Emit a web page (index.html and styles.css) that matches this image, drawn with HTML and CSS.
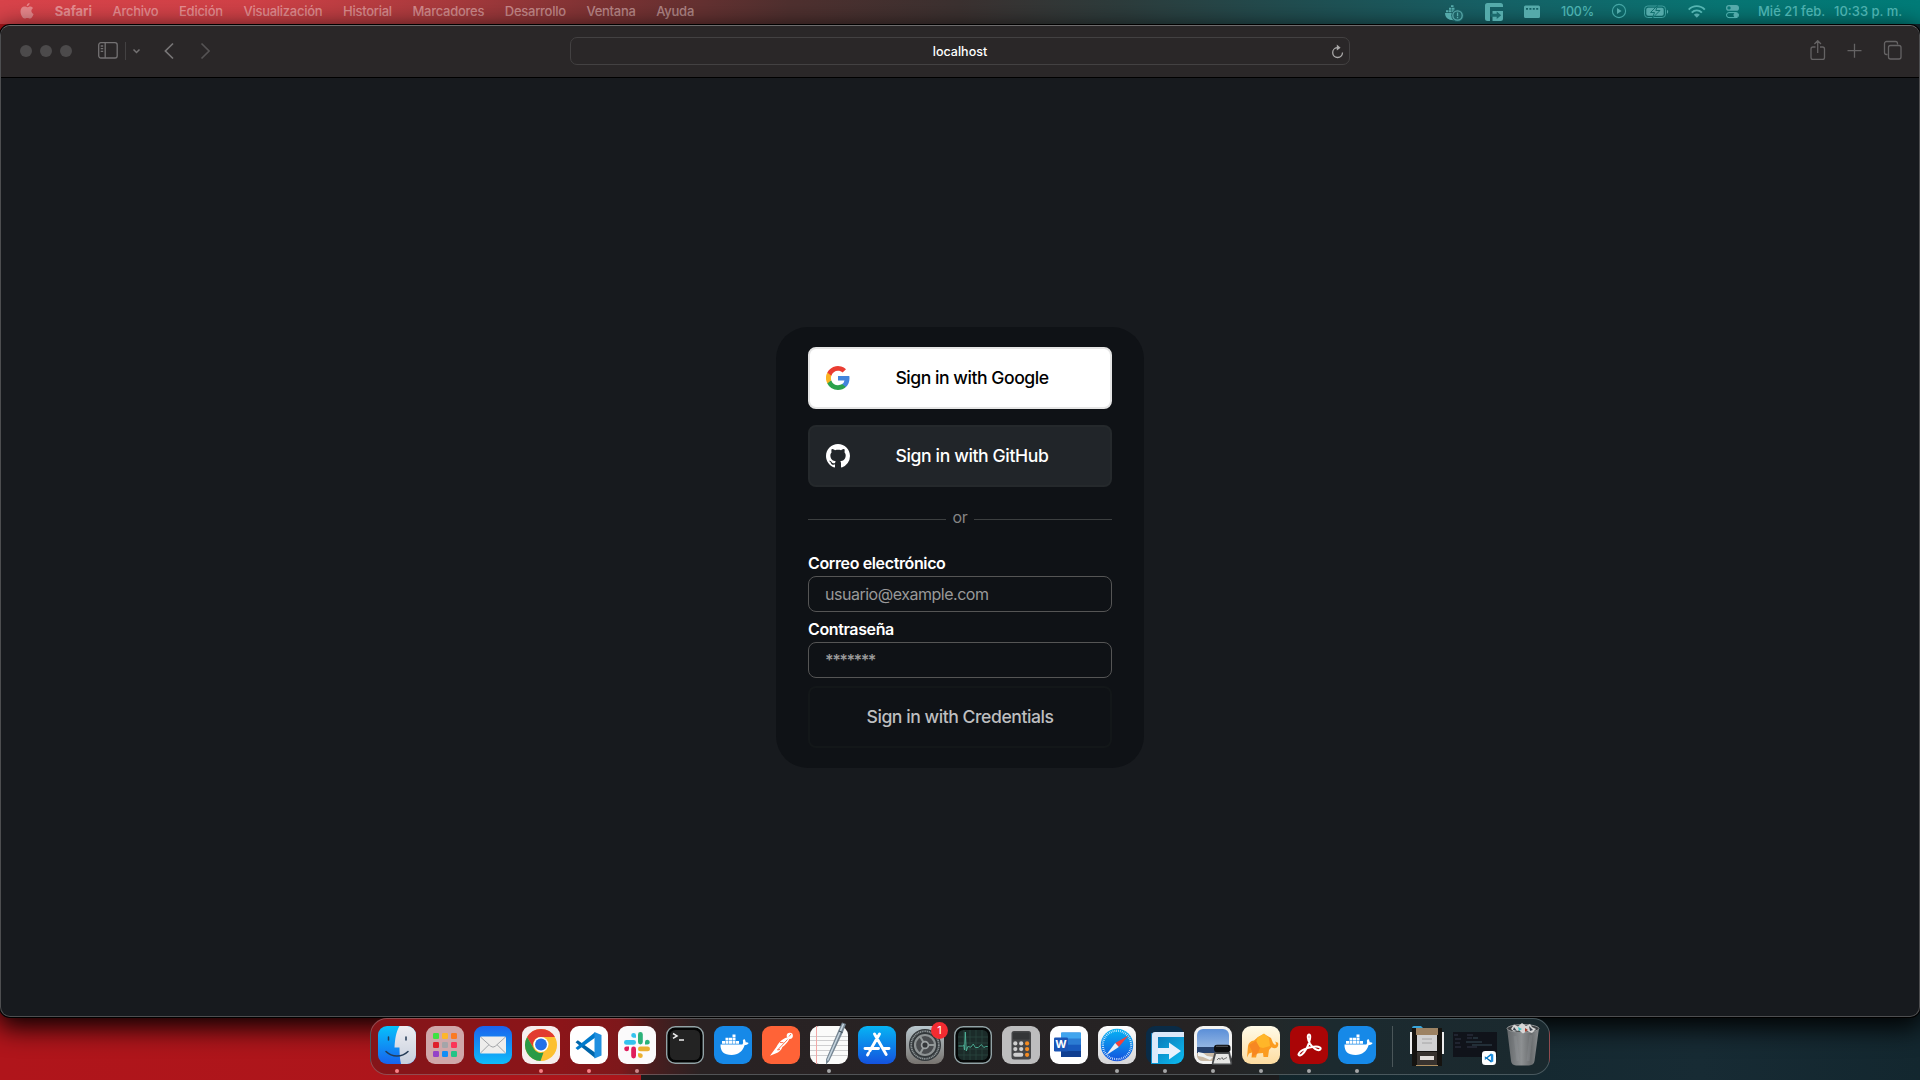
FILE: index.html
```
<!DOCTYPE html>
<html lang="es">
<head>
<meta charset="utf-8">
<title>localhost</title>
<link rel="stylesheet" href="styles.css">
</head>
<body>
<svg class="defs" width="0" height="0" aria-hidden="true">
  <defs>
    <linearGradient id="gBlue" x1="0" y1="0" x2="0" y2="1"><stop offset="0" stop-color="#07c1fb"/><stop offset="1" stop-color="#1763ee"/></linearGradient>
    <linearGradient id="gMail" x1="0" y1="0" x2="0" y2="1"><stop offset="0" stop-color="#1a63ee"/><stop offset="1" stop-color="#0fbcfa"/></linearGradient>
    <linearGradient id="gStore" x1="0" y1="0" x2="0" y2="1"><stop offset="0" stop-color="#06b4f4"/><stop offset="1" stop-color="#1452de"/></linearGradient>
    <linearGradient id="gFace" x1="0" y1="0" x2="0" y2="1"><stop offset="0" stop-color="#eeeef2"/><stop offset="1" stop-color="#c7cfdd"/></linearGradient>
    <linearGradient id="gPaper" x1="0" y1="0" x2="0" y2="1"><stop offset="0" stop-color="#fff"/><stop offset="1" stop-color="#d5d5d7"/></linearGradient>
    <linearGradient id="gMetal" x1="0" y1="0" x2="0" y2="1"><stop offset="0" stop-color="#b9c7ce"/><stop offset="1" stop-color="#77736f"/></linearGradient>
    <linearGradient id="gArrow" x1="0" y1="0" x2="1" y2="1"><stop offset="0" stop-color="#0b6fae"/><stop offset="1" stop-color="#0cbdf3"/></linearGradient>
    <linearGradient id="gSky" x1="0" y1="0" x2="0" y2="1"><stop offset="0" stop-color="#5b8fd8"/><stop offset="1" stop-color="#bcd2ea"/></linearGradient>
    <linearGradient id="gSand" x1="0" y1="0" x2="0" y2="1"><stop offset="0" stop-color="#fffbe8"/><stop offset="1" stop-color="#fddca0"/></linearGradient>
    <linearGradient id="gBin" x1="0" y1="0" x2="1" y2="0"><stop offset="0" stop-color="#63676a"/><stop offset=".45" stop-color="#8d9092"/><stop offset=".75" stop-color="#6a6d6f"/><stop offset="1" stop-color="#8b8e90"/></linearGradient>
    <g id="whale">
      <path d="M6.500 18.400h21.800c.9-.8 1-2.200.5-3.600.3-.8.8-1.300 1.300-1.700 1 .7 1.700 1.900 1.500 3.200 1.200-.2 2.200.1 3 .7-.6 1.400-2 2.100-3.900 2.100C28.700 25.500 24.300 28.900 17.600 28.900 10 28.900 6.300 25.400 6.500 18.400z"/>
      <path d="M8 14.900h3v2.800H8zM11.500 14.900h3v2.800h-3zM15 14.900h3v2.800h-3zM18.500 14.900h3v2.800h-3zM22 14.900h3v2.800h-3zM11.500 11.700h3v2.800h-3zM15 11.700h3v2.800h-3zM18.500 11.700h3v2.800h-3zM18.500 8.600h3v2.700h-3z"/>
    </g>
    <g id="code">
      <path fill="#0065a9" d="m5.500 16.200 2.300-1.900L25 26.500V32z"/>
      <path fill="#007acc" d="m5.500 22 2.300 1.900L25 11.700V6.200z"/>
      <path fill="#1f8fe0" d="m24.500 6 7 3v20.400l-7 3z"/>
    </g>
  </defs>
</svg>

<header class="menubar">
  <nav class="menus">
    <svg class="apple" viewBox="0 0 14 16" width="14" height="16"><path d="M9.600 0c.1 1.700-1.300 3.200-2.900 3.200C6.500 1.700 8 .2 9.600 0zM7.200 4.300c.8 0 1.700-.8 3-.8 1.100 0 2.200.6 2.900 1.500-2.500 1.500-2.100 4.900.5 5.900-.6 1.800-2 4.600-3.600 4.600-1 0-1.500-.6-2.700-.6s-1.700.6-2.600.6C2.900 15.600.5 12 .5 8.500c0-3.100 1.900-4.900 3.900-4.900 1.200 0 2.200.7 2.800.7z"/></svg>
    <b>Safari</b><span>Archivo</span><span>Edición</span><span>Visualización</span><span>Historial</span><span>Marcadores</span><span>Desarrollo</span><span>Ventana</span><span>Ayuda</span>
  </nav>
  <div class="status">
    <svg viewBox="0 0 313 24" width="313" height="24">
      <path d="M1 13h11v7C5 21 1 18 1 13zM2 10.300h2.500v2H2zM5 10.300h2.500v2H5zM8 10.300h2.500v2H8zM5 7.700h2.500v2H5zM8 7.700h2.500v2H8zM7 5.300h2.500V7.100H7z"/>
      <circle cx="13.500" cy="15.500" r="6.300" fill="#1d6165"/><circle cx="13.500" cy="15.500" r="4.700" fill="none" stroke="#56a5a6" stroke-width="1.300"/><path d="M12.900 12.600h1.300v3.600h-1.300zM12.900 17h1.300v1.300h-1.300z"/>
      <path d="M43.500 3h13A2.500 2.500 0 0 1 59 5.500V7H46v14h-2.500a2.500 2.500 0 0 1-2.500-2.500v-13A2.500 2.500 0 0 1 43.500 3z"/>
      <path d="M48.500 11H59v7.500a2.500 2.500 0 0 1-2.500 2.500h-8z"/><path fill="#1b696c" d="M46.500 13.800h6.200v-2.200l4.500 3.700-4.500 3.700v-2.200h-6.200z"/>
      <path fill-rule="evenodd" d="M81.500 5.500h13A1.500 1.500 0 0 1 96 7v9.500a1.500 1.500 0 0 1-1.500 1.500h-13a1.500 1.500 0 0 1-1.500-1.500V7a1.500 1.500 0 0 1 1.500-1.500zM82 8v1.700h2V8zm3.400 0v1.700h2V8zm3.400 0v1.700h2V8zm3.400 0v1.700h2V8z"/>
      <circle cx="175" cy="11" r="6.600" fill="none" stroke="#45a6a5" stroke-width="1.100"/><path d="M173 8.100v5.800l4.600-2.900z"/>
      <rect x="200.500" y="6" width="21" height="11.500" rx="3.300" fill="none" stroke="#3f9d9c"/><rect x="202.300" y="7.800" width="17.400" height="7.900" rx="1.900"/><path d="M223 9.800c1.600.5 1.600 3.400 0 4z"/><path d="m213.500 5.500-7 7h4l-2 5.500 7.500-7.500h-4.200z" stroke="#10706f" stroke-width="1"/>
      <g fill="none" stroke="#55b5b2" stroke-width="1.900"><path d="M244.700 9.600c4.500-4.600 11.600-4.600 16.100 0"/><path d="M247.700 12.600c3-2.900 7.200-2.900 10.200 0"/></g><path d="M249.800 14.700c1.800-1.500 4.200-1.500 6 0l-3 3z"/>
      <rect x="282" y="5" width="13" height="5.800" rx="2.900"/><circle cx="285" cy="7.900" r="1.700" fill="#087775"/><rect x="282.500" y="12.600" width="12" height="5" rx="2.500" fill="none" stroke="#55b5b2"/><circle cx="291.800" cy="15.100" r="2.400"/>
    </svg>
    <span class="percent">100%</span>
    <span class="date">Mié 21 feb.</span><span class="clock">10:33 p. m.</span>
  </div>
</header>

<main class="window">
  <div class="toolbar">
    <div class="tools">
      <div class="lights"><i></i><i></i><i></i></div>
      <svg class="side" viewBox="0 0 44 20" width="44" height="20" fill="none" stroke="#747273" stroke-width="1.300"><rect x=".7" y="1.700" width="18.500" height="15.300" rx="2.200"/><path d="M7.200 2v15M2.700 5h2.500M2.700 7.700h2.500M2.700 10.400h2.500"/><path d="M27.500 1v18" stroke="#434142" stroke-width="1"/><path d="m35.500 8.500 3 3 3-3" stroke-width="1.500"/></svg>
      <svg class="arrows" viewBox="0 0 46 18" width="46" height="18" fill="none" stroke-width="1.700"><path d="M9 1.500 1.400 9 9 16.500" stroke="#777576"/><path d="M37.500 1.500 45.100 9l-7.600 7.500" stroke="#555354"/></svg>
    </div>
    <div class="address"><span>localhost</span>
      <svg class="reload" viewBox="0 0 13 15" width="13" height="15"><path d="M6.200 3.700a4.900 4.900 0 1 0 5.300 4.900" fill="none" stroke="#a9a8a8" stroke-width="1.300"/><path d="M5.800.5v6l3.800-2.700z" fill="#a9a8a8"/></svg>
    </div>
    <svg class="actions" viewBox="0 0 92 20" width="92" height="20" fill="none" stroke="#656364" stroke-width="1.300"><path d="M5.500 7H3a2 2 0 0 0-2 2v8.500a2 2 0 0 0 2 2h9.500a2 2 0 0 0 2-2V9a2 2 0 0 0-2-2H10M7.700 13V1M4.400 4l3.300-3.300L11 4M37.500 10.700h14M44.500 3.700v14"/><path d="M77.500 14.500h-1a2 2 0 0 1-2-2v-9a2 2 0 0 1 2-2h9a2 2 0 0 1 2 2v1"/><rect x="78.500" y="5.500" width="12.500" height="13.500" rx="2"/></svg>
  </div>
  <section class="page">
    <div class="card">
      <button class="provider google">
        <svg viewBox="0 0 24 24" width="24" height="24"><path fill="#4285dc" d="M23.500 12.300c0-.8-.1-1.600-.2-2.300H12v4.500h6.500a5.600 5.600 0 0 1-2.400 3.600v3h3.900c2.300-2.100 3.500-5.200 3.500-8.800z"/><path fill="#2ba24c" d="M12 24c3.200 0 6-1.100 7.900-2.900l-3.900-3c-1 .7-2.400 1.200-4 1.200-3.100 0-5.800-2.100-6.700-4.900H1.300v3.100A12 12 0 0 0 12 24z"/><path fill="#fbb322" d="M5.300 14.300a7 7 0 0 1 0-4.600V6.600H1.300a12 12 0 0 0 0 10.800z"/><path fill="#ea3d32" d="M12 4.800c1.800 0 3.300.6 4.600 1.800L20 3.200A12 12 0 0 0 1.300 6.600l4 3.100C6.200 6.900 8.900 4.800 12 4.800z"/></svg>
        <span>Sign in with Google</span>
      </button>
      <button class="provider github">
        <svg viewBox="0 0 16 16" width="24" height="24"><path fill="#fff" d="M8 0C3.580 0 0 3.580 0 8c0 3.540 2.290 6.530 5.470 7.590.4.070.55-.17.55-.38 0-.19-.01-.82-.01-1.490-2.010.37-2.530-.49-2.690-.94-.09-.23-.48-.94-.82-1.130-.28-.15-.68-.52-.01-.53.63-.01 1.080.58 1.230.82.72 1.210 1.870.87 2.330.66.07-.52.28-.87.51-1.070-1.780-.2-3.640-.89-3.640-3.950 0-.87.31-1.590.82-2.150-.08-.2-.36-1.020.08-2.120 0 0 .67-.21 2.200.82.64-.18 1.320-.27 2-.27s1.360.09 2 .27c1.530-1.040 2.200-.82 2.200-.82.44 1.100.16 1.920.08 2.120.51.56.82 1.270.82 2.150 0 3.070-1.870 3.750-3.650 3.950.29.25.54.73.54 1.480 0 1.070-.01 1.930-.01 2.200 0 .21.15.46.55.38A8.010 8.010 0 0 0 16 8c0-4.420-3.580-8-8-8z"/></svg>
        <span>Sign in with GitHub</span>
      </button>
      <div class="or"><span>or</span></div>
      <label class="field"><span>Correo electrónico</span><input type="text" placeholder="usuario@example.com"></label>
      <label class="field"><span>Contraseña</span><input class="secret" type="password" placeholder="*******"></label>
      <button class="provider credentials"><span>Sign in with Credentials</span></button>
    </div>
  </section>
</main>

<footer class="dock">
  <div class="app open"><svg viewBox="0 0 38 38"><rect width="38" height="38" rx="9" fill="url(#gBlue)"/><path fill="url(#gFace)" d="M21.500 0H29a9 9 0 0 1 9 9v20a9 9 0 0 1-9 9h-6c-1-4-1.500-9-1.500-16.500h-5C17 13 18 6 21.500 0z"/><g fill="none" stroke="#243b55" stroke-width="1.500" stroke-linecap="round"><path d="M10.500 11v3M28 11v3M8 25.500c6 6 16 6 22 0"/></g></svg></div>
  <div class="app"><svg viewBox="0 0 38 38"><rect width="38" height="38" rx="9" fill="#d0a8aa"/><g><rect x="7" y="7" width="6" height="6" rx="1.300" fill="#3ee242"/><rect x="16" y="7" width="6" height="6" rx="1.300" fill="#fdb62a"/><rect x="25" y="7" width="6" height="6" rx="1.300" fill="#fa7a22"/><rect x="7" y="16" width="6" height="6" rx="1.300" fill="#df202a"/><rect x="16" y="16" width="6" height="6" rx="1.300" fill="#a4a5a9"/><rect x="25" y="16" width="6" height="6" rx="1.300" fill="#fb3557"/><rect x="7" y="25" width="6" height="6" rx="1.300" fill="#9543c8"/><rect x="16" y="25" width="6" height="6" rx="1.300" fill="#138ef5"/><rect x="25" y="25" width="6" height="6" rx="1.300" fill="#23c486"/></g></svg></div>
  <div class="app"><svg viewBox="0 0 38 38"><rect width="38" height="38" rx="9" fill="url(#gMail)"/><rect x="6" y="10.500" width="26" height="17" rx="1.500" fill="#eeedec"/><path d="m6.500 11 10.300 9.300q2.200 1.700 4.400 0L31.500 11M6.500 27l8.500-8.300M31.500 27 23 18.700" fill="none" stroke="#a3a5a8" stroke-width="1"/></svg></div>
  <div class="app open"><svg viewBox="0 0 38 38"><rect width="38" height="38" rx="9" fill="#f6eeee"/><circle cx="19" cy="19" r="16" fill="#fcc031"/><path fill="#e23c30" d="M5.100 11a16 16 0 0 1 27.800 0H19a8 8 0 0 0-7 12z"/><path fill="#2a9a46" d="M5.100 11 12 23a8 8 0 0 0 9.500 3.600L18.500 35A16 16 0 0 1 5.100 11z"/><circle cx="19" cy="18.500" r="7.500" fill="#fff"/><circle cx="19" cy="18.500" r="5.900" fill="#2471e7"/></svg></div>
  <div class="app open"><svg viewBox="0 0 38 38"><rect width="38" height="38" rx="9" fill="#fff"/><use href="#code"/></svg></div>
  <div class="app open"><svg viewBox="0 0 38 38"><rect width="38" height="38" rx="9" fill="#fbfafb"/><g fill="#35c2ee"><rect x="6" y="14" width="12" height="4.800" rx="2.400"/><path d="M18 12.500h-2.500A2.400 2.400 0 1 1 18 10z" transform="translate(0 -.8)"/></g><g fill="#2db27a"><rect x="20" y="6" width="4.800" height="12.500" rx="2.400"/><path d="M27 18.500V16a2.400 2.400 0 1 1 2.400 2.500z"/></g><g fill="#ebb031"><rect x="20" y="20.500" width="12" height="4.800" rx="2.400"/><path d="M20 27.200h2.500a2.400 2.400 0 1 1-2.500 2.400z"/></g><g fill="#df1d5c"><rect x="13.200" y="20.500" width="4.800" height="12" rx="2.400"/><path d="M11 20.500V23a2.400 2.400 0 1 1-2.400-2.500z"/></g></svg></div>
  <div class="app"><svg viewBox="0 0 38 38"><rect x=".7" y=".7" width="36.600" height="36.600" rx="8.500" fill="#030404" stroke="#92a3a6" stroke-width="1.400"/><rect x="4" y="4" width="30" height="30" rx="5.500" fill="#232323"/><path d="m7 7.500 4 2.400-4 2.400M13 14h5" fill="none" stroke="#eee" stroke-width="1.500"/></svg></div>
  <div class="app"><svg viewBox="0 0 38 38"><rect width="38" height="38" rx="9" fill="#1689e8"/><use href="#whale" fill="#fff"/></svg></div>
  <div class="app"><svg viewBox="0 0 38 38"><rect width="38" height="38" rx="9" fill="#ff6337"/><circle cx="27.800" cy="9.800" r="3.100" fill="#fff"/><path d="M25 11.500c-5 1.300-8.600 5.400-10.600 9.600L8 29.800l5.500-2.200c3.500-1 5.800-3.500 6.900-6.600 2.800-2 5.200-4.400 7-8z" fill="#fff"/><path d="m25.500 13.500-10 10.500 2.500-.5M18 16.500l3.500.2M29 8l-2 2.500" fill="none" stroke="#ff6337" stroke-width=".9"/></svg></div>
  <div class="app open"><svg viewBox="0 0 38 38"><rect width="38" height="38" rx="9" fill="#fbfbfa"/><path d="M0 10.500h38M0 14.500h38M0 19.500h38M0 24.500h38M0 29.500h38" stroke="#c9cacb" stroke-width=".9"/><path d="M6.500 0v38" stroke="#f2a7a5"/><path d="m32-3.500 4 1.600-3 8-13.700 28.900-3.300 3.500.1-5.200L28.300 4.500z" fill="#748491"/><path d="m33.500-2-16 36.500" stroke="#c6d5df" stroke-width="1.600"/><path d="m29 5 3.500 1.600" stroke="#36424d"/></svg></div>
  <div class="app"><svg viewBox="0 0 38 38"><rect width="38" height="38" rx="9" fill="url(#gStore)"/><path d="m21.500 8-9.700 17M16.500 8l11.700 20.500M7 22.500h13.500M25.500 22.500H31M10.500 27.200l-1 1.700" fill="none" stroke="#fff" stroke-width="2.900" stroke-linecap="round"/></svg></div>
  <div class="app"><svg viewBox="0 0 38 38"><rect width="38" height="38" rx="9" fill="url(#gMetal)"/><circle cx="19" cy="19" r="16" fill="#33383b"/><circle cx="19" cy="19" r="13.800" fill="none" stroke="#8b9294" stroke-width="1.800" stroke-dasharray="1.200 .6"/><circle cx="19" cy="19" r="10" fill="#494c4f" stroke="#8d9293" stroke-width="2.200"/><path d="m19 19 10 0M19 19l-5-8.700M19 19l-5 8.700" stroke="#929898" stroke-width="2"/><circle cx="19" cy="19" r="3.400" fill="#34373a" stroke="#9ea3a4" stroke-width="1.700"/></svg><em class="badge">1</em></div>
  <div class="app"><svg viewBox="0 0 38 38"><rect x=".7" y=".7" width="36.600" height="36.600" rx="8.500" fill="#050707" stroke="#92a3a6" stroke-width="1.400"/><rect x="4" y="4" width="30" height="30" rx="5.500" fill="#1b2b29"/><path d="M4 11h30M4 17h30M4 23h30M4 29h30M10 4v30M16 4v30M22 4v30M28 4v30" stroke="#2d4743" stroke-width=".7"/><path d="M4.500 20h4l1.200-1 .8 5L11.300 6l1 19 1.500-4.500 3 .7 2.500-3.200 2 3.500h3l3-3 2.500 3 2-1h2" fill="none" stroke="#4fb69b" stroke-width=".9"/></svg></div>
  <div class="app"><svg viewBox="0 0 38 38"><rect width="38" height="38" rx="9" fill="#bdbdbe"/><rect x="9.500" y="5" width="19.500" height="28.500" rx="2.500" fill="#454648"/><rect x="11" y="6.500" width="16.500" height="7" rx="1" fill="#343638"/><g fill="#cfcfcf"><circle cx="13.300" cy="17.400" r="2.100"/><circle cx="19.200" cy="17.400" r="2.100"/><circle cx="13.300" cy="23.100" r="2.100"/><circle cx="19.200" cy="23.100" r="2.100"/><rect x="11.200" y="26.800" width="10.100" height="4" rx="2"/></g><g fill="#f58b20"><circle cx="25.100" cy="17.400" r="2.100"/><circle cx="25.100" cy="23.100" r="2.100"/><circle cx="25.100" cy="28.800" r="2.100"/></g></svg></div>
  <div class="app"><svg viewBox="0 0 38 38"><rect width="38" height="38" rx="9" fill="#fff"/><rect x="11" y="6.500" width="20" height="24.500" rx="1.500" fill="#2b7cd3"/><path d="M11 6.500h20v6H11z" fill="#41a5ee"/><path d="M11 18.700h20v6H11z" fill="#185abd"/><path d="M11 24.800h20V31H11z" fill="#103f91"/><rect x="4" y="11.500" width="14" height="14" rx="1.300" fill="#1b55b5"/><text x="11" y="22.300" text-anchor="middle" class="word">W</text></svg></div>
  <div class="app open"><svg viewBox="0 0 38 38"><rect width="38" height="38" rx="9" fill="url(#gPaper)"/><circle cx="19" cy="19" r="16.200" fill="url(#gStore)"/><circle cx="19" cy="19" r="14.200" fill="none" stroke="#e9f5ff" stroke-width="2.200" stroke-dasharray=".7 1.180"/><path d="M30.500 9.500 20.800 21l-3.600-4z" fill="#f3403c"/><path d="M7.800 29.500 17.200 17l3.600 4z" fill="#eceef2"/></svg></div>
  <div class="app open"><svg viewBox="0 0 38 38"><rect width="38" height="38" rx="9" fill="#0a2b46"/><path d="M5 7h33v22a9 9 0 0 1-9 9H5z" fill="url(#gArrow)"/><path d="M6 9q0-3 3-3h29v5H12v26H6z" fill="#dbe9fa"/><path d="M12 22h11v-5.500l12 8.500-12 8.500V28H12z" fill="#e8f1fd"/></svg></div>
  <div class="app open"><svg viewBox="0 0 38 38"><rect width="38" height="38" rx="9" fill="#f3f3f2"/><rect x="3" y="3" width="32" height="32" rx="6" fill="url(#gSky)"/><path d="M3 21h32v6H3z" fill="#26416d"/><path d="M3 27h32v3a5 5 0 0 1-5 5H9a6 6 0 0 1-6-5z" fill="#c9b9a4"/><path d="m4 26 5 1 4 3 6 1-3 3-7-3-5-1z" fill="#eef2f3"/><path d="M20.500 26h15.500l2.200 11q.2 2-1.700 2h-17q-2 0-1.700-2z" fill="#4a4c4e"/><path d="M22 28h12.500l2 9.500H19.500z" fill="#e6e6e4"/><rect x="20" y="18.700" width="16.500" height="7.600" rx="3" fill="#0d0e0f"/><path d="M22 20.300h12" stroke="#5b5d60"/><path d="m23 34 2-2 1 1.500 2-2 1 2 4-2" fill="none" stroke="#444" stroke-width=".7"/></svg></div>
  <div class="app open"><svg viewBox="0 0 38 38"><rect width="38" height="38" rx="9" fill="url(#gSand)"/><path d="M6 20q1-5 6-5.500L16 11l6-3 7 4 2 5 2 2q2-1 0-3.500l3 1.200c1.500 5-3 7-6.500 4.500L27 24l-1 7h-4.500l-.5-4-6 .5-1 4H9.500l.5-5-3 1-2 4z" fill="#fb9b20"/><path d="m15.500 11.500 6.500-4 5 4.500 1 8-7 2-8-2z" fill="#ffb629"/><path d="m7 19 7-4 4 7-2 5-6 4 .5-5z" fill="#f78722"/></svg></div>
  <div class="app open"><svg viewBox="0 0 38 38"><rect width="38" height="38" rx="9" fill="#aa0506"/><path d="M8.500 28.500c.5-3.500 8-7 15-7.800 6-.7 8.500 1.300 6.500 3-2.500 1.700-7.500-2-10-6-2.500-4.300-3-9-1-9.200 2.500-.2 1 7.500-2.300 13.700-3.200 5.800-6.700 8.500-8 6.800z" fill="none" stroke="#fff" stroke-width="2"/></svg></div>
  <div class="app open"><svg viewBox="0 0 38 38"><rect width="38" height="38" rx="9" fill="#1689e8"/><use href="#whale" fill="#fff"/></svg></div>
  <hr>
  <svg class="stack" viewBox="0 0 34 42" width="34" height="42"><path d="M2 2q0-2 2-2h7l2 2H32v6H2z" fill="#37a5dc"/><path d="M0 6h34v22H0z" fill="#ececec"/><path d="M2 2h30v38H2z" fill="#151310"/><path d="M6 2h22v7H6z" fill="#9c8263"/><path d="M7 9h20v16H7z" fill="#d1d1d2"/><path d="M12 13h10M12 17h10" stroke="#999" stroke-width=".8"/><path d="M7 26h20v13H7z" fill="#38332f"/><path d="M10 30h14v4H10z" fill="#e2dedb"/><path d="M6 39h22v1H6z" fill="#b19060"/></svg>
  <svg class="minimized" viewBox="0 0 44 36" width="44" height="36"><rect y="3" width="44" height="25" fill="#10131a"/><path d="M1 6h4M2 10h6M2 14h5M2 18h6M14 6h6M14 9h5M14 18h10" stroke="#303747"/><path d="M13 13h16M19 16h20M20 9h5" stroke="#354b55"/><rect x="29" y="22" width="14" height="14" rx="3.300" fill="#fff"/><svg x="29.500" y="22.500" width="13" height="13" viewBox="0 0 38 38"><use href="#code"/></svg></svg>
  <svg class="trash" viewBox="0 0 34 44" width="34" height="44"><path d="m1 5 4 33q.5 4 5 4.500h13q5-.5 5.500-4.500L33 5z" fill="url(#gBin)"/><ellipse cx="17" cy="5.500" rx="16" ry="4" fill="#3e4143" stroke="#8d9092"/><path d="m5 6 3-4.500 4 2L16 0l4 3 4-2 2 3 4 2-4 4-5-2-4 2.500-4-3-5 1z" fill="#d6d6d6"/><path d="m12 4 4 2-3 2z" fill="#3fc5c8"/><path d="m19 5 3 2-3 2z" fill="#a63c2d"/><path d="m23 3 4 4-3 1zM8 4l3 4-4-1z" fill="#39424d"/><path d="m9 13 3 25M25 12l-3 26" stroke="#999c9e" stroke-opacity=".25" stroke-width="3"/></svg>
</footer>
</body>
</html>
```
FILE: styles.css
```
* { box-sizing: border-box; }
html, body { margin: 0; height: 100%; overflow: hidden; }
body {
  display: flex;
  flex-direction: column;
  width: 1920px;
  height: 1080px;
  font-family: Inter, "Liberation Sans", sans-serif;
  background: linear-gradient(90deg, #b0151b 0, #ab161b 641px, #1c1c1d 641px, #1b1c1d 1279px, #12262c 1279px, #172b34 1700px, #13272f 1920px);
}
.defs { position: absolute; }

.menubar {
  flex: none;
  height: 24px;
  display: flex;
  justify-content: space-between;
  background: linear-gradient(90deg, #d8434a 0, #d04147 250px, #a83a3d 450px, #783233 620px, #4f302f 790px, #3b3130 960px, #2d3c3c 1120px, #1f5053 1320px, #176065 1480px, #087573 1720px, #007c78 1920px);
  font-size: 13px;
  line-height: 23px;
}
.menus {
  display: flex;
  gap: 20.700px;
  padding-left: 20px;
  color: rgba(255, 230, 230, .48);
  font-weight: 500;
  letter-spacing: -.27px;
}
.menus b { font-weight: 700; letter-spacing: -.04px; }
.apple { margin-top: 3px; fill: rgba(255, 230, 230, .42); }
.status {
  position: relative;
  width: 476px;
  display: flex;
  color: #4cb0ae;
  font-weight: 500;
}
.status svg { fill: #55aaaa; }
.percent { position: absolute; left: 117px; font-weight: 500; font-size: 12.500px; letter-spacing: -.2px; }
.date { width: 76px; margin-left: 1px; white-space: nowrap; }
.clock { white-space: nowrap; letter-spacing: 0; }

.window {
  flex: none;
  display: flex;
  flex-direction: column;
  overflow: hidden;
  background: #171a1e;
  border: 1px solid #4d4e50;
  border-top-color: #6d6b6c;
  border-radius: 10px;
  margin-top: 1px;
  height: 992px;
  box-shadow: 0 0 0 1px #000, 0 8px 26px 3px rgba(0, 0, 0, .95);
}
.toolbar {
  flex: none;
  height: 52px;
  display: grid;
  grid-template-columns: 1fr 780px 1fr;
  align-items: center;
  background: #2a2728;
  border-bottom: 1px solid #000;
}
.tools { display: flex; align-items: center; margin-top: -1px; }
.lights { display: flex; gap: 8px; margin-left: 19px; }
.lights i { width: 12px; height: 12px; border-radius: 50%; background: #4c4a4b; }
.side { margin-left: 26px; }
.arrows { margin-left: 22px; }
.address {
  position: relative;
  height: 28px;
  margin-top: -1px;
  border: 1px solid #434142;
  border-radius: 7px;
  color: #fff;
  font-size: 12.500px;
  font-weight: 500;
  line-height: 27px;
  text-align: center;
}
.reload { position: absolute; right: 5px; top: 6px; }
.actions { justify-self: end; margin: -4px 17.500px 0 0; }
.page {
  flex: 1;
  display: flex;
  justify-content: center;
  align-items: flex-start;
  padding-top: 249px;
}

.card {
  width: 368px;
  height: 441px;
  padding: 20px 32px;
  border-radius: 32px;
  background: #0f1216;
  color: #fff;
  font-size: 16px;
}
.provider {
  display: flex;
  align-items: center;
  justify-content: center;
  width: 100%;
  height: 62px;
  padding: 0 15px;
  border: 2px solid;
  border-radius: 8px;
  font: 550 17.600px/20px Inter, sans-serif;
  letter-spacing: -.47px;
}
.provider svg { flex: none; margin-left: 1px; }
.provider svg + span { flex: 1; padding-right: 1px; }
.google { color: #000; background: #fff; border-color: #e5e5e5; }
.github { margin-top: 16px; color: #fff; background: #212529; border-color: #25292c; letter-spacing: -.38px; }
.or {
  display: flex;
  align-items: center;
  gap: 6px;
  height: 20px;
  margin: 21px 0 25px;
  color: #858585;
}
.or span { margin-top: -3px; line-height: 20px; letter-spacing: -.3px; }
.or::before, .or::after { content: ""; flex: 1; height: 1px; margin-top: 3px; background: #3c3f40; }
.field {
  display: flex;
  flex-direction: column;
  gap: 3px;
  height: 66px;
  font-weight: 600;
  letter-spacing: -.37px;
  line-height: 20px;
}
.field input {
  width: 100%;
  height: 36px;
  padding: 0 16px;
  border: 1px solid #555;
  border-radius: 8px;
  outline: 0;
  background: #0f1216;
  font: 400 16px Inter, sans-serif;
  letter-spacing: -.48px;
}
.field .secret { font-weight: 600; letter-spacing: -1.500px; }
.field input::placeholder { color: #999; opacity: 1; }
.credentials { margin-top: 1px; color: #bebfc0; background: #0f1216; border-color: #131719; letter-spacing: -.45px; }

.dock {
  position: relative;
  flex: none;
  align-self: flex-start;
  display: flex;
  align-items: flex-start;
  width: 1180px;
  height: 57px;
  margin: 1px 0 0 370px;
  padding: 7px 8px 0 2px;
  border: 1px solid rgba(170, 190, 195, .32);
  border-radius: 17px;
  background: linear-gradient(90deg, #851519 0, #8b1519 190px, #7d181b 250px, #4b1d1e 280px, #292223 330px, #252324 840px, #222829 900px, #1c2a2f 960px, #1a292e 1180px);
}
.app { position: relative; flex: none; width: 48px; height: 48px; padding-left: 5px; }
.app > svg { display: block; width: 38px; height: 38px; overflow: visible; }
.open::after { content: ""; position: absolute; left: 22px; top: 43px; width: 4px; height: 4px; border-radius: 50%; background: #a5a6a7; }
.open:nth-child(-n+5)::after { background: #fa8086; }
.open:nth-child(6)::after { background: #cb8588; }
.badge {
  position: absolute;
  left: 30px;
  top: -4px;
  width: 17px;
  height: 17px;
  border-radius: 50%;
  background: #f22b31;
  color: #fff;
  font: 11px/17px Inter, sans-serif;
  text-align: center;
}
.word { font: 700 11px Inter, sans-serif; fill: #fff; }
.dock hr { width: 1px; height: 41px; margin: 0 17px 0 11px; border: 0; background: #4a5659; }
.minimized { margin: 3px 9px 0 9px; }
.trash { margin-top: -3px; }
```
